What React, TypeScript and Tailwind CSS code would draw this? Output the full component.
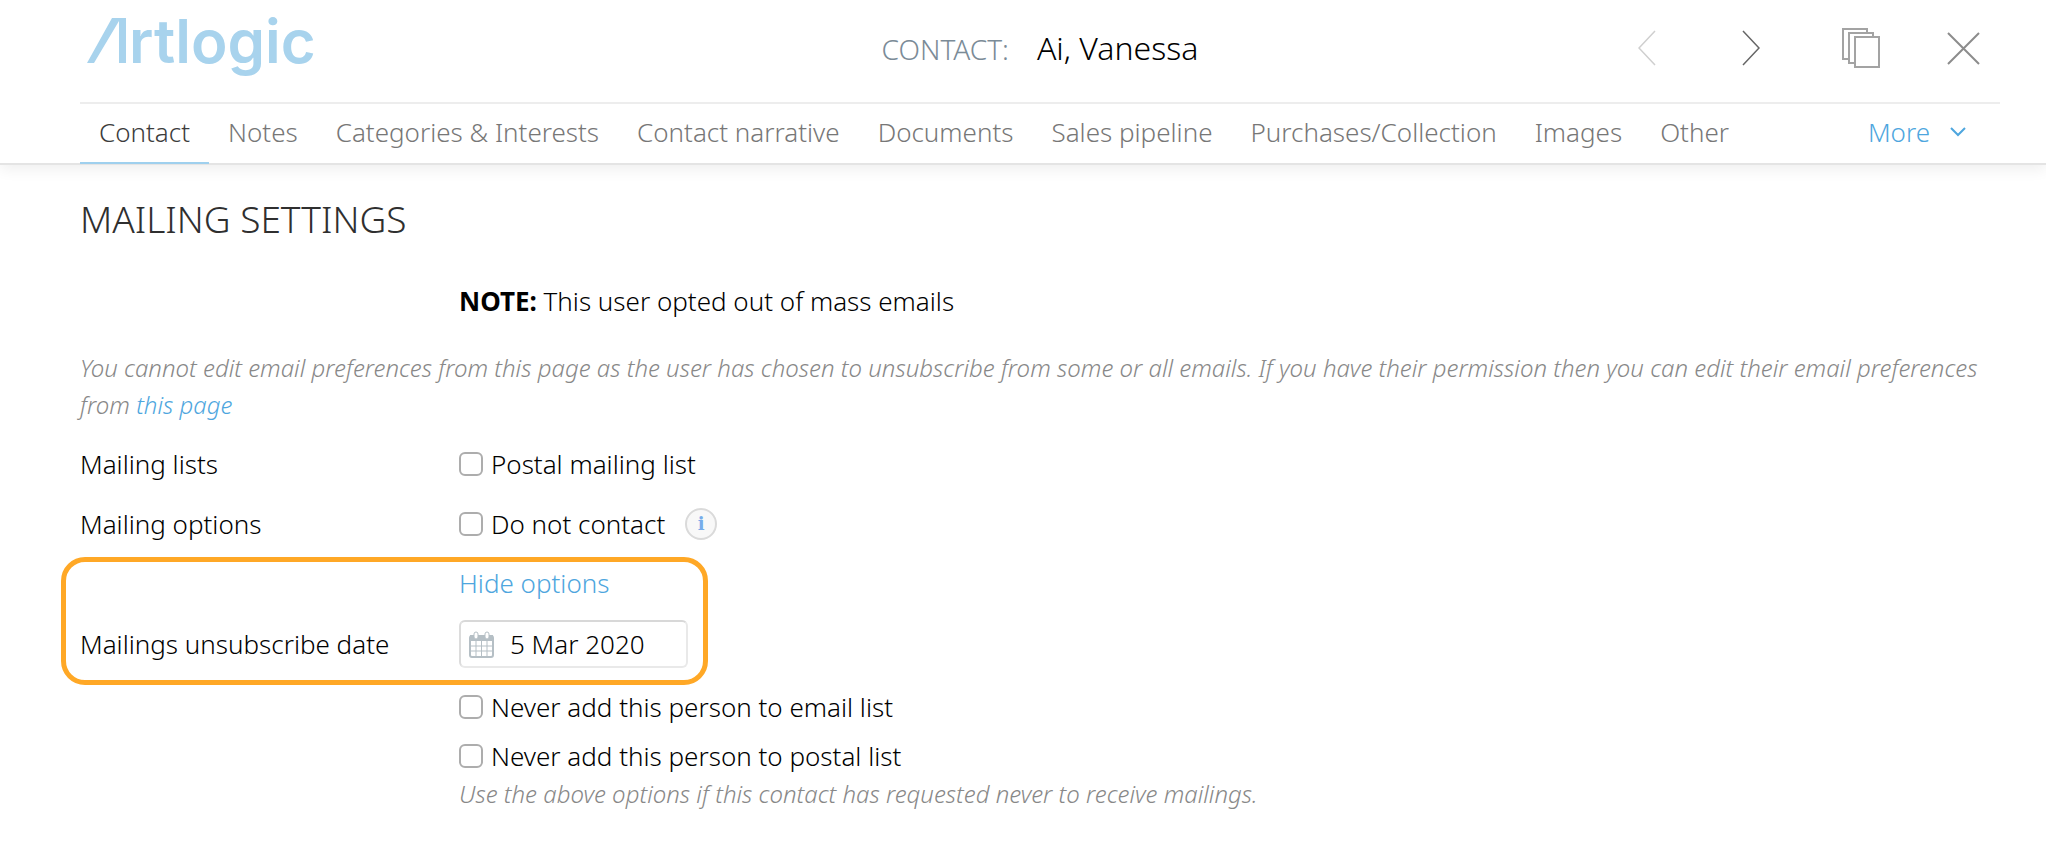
import { useState } from 'react';

const tabs = [
  'Contact',
  'Notes',
  'Categories & Interests',
  'Contact narrative',
  'Documents',
  'Sales pipeline',
  'Purchases/Collection',
  'Images',
  'Other',
];

const Logo = () => (
  <svg width="244" height="88" viewBox="0 0 244 88" fill="#a8d3ed" role="img" aria-label="Artlogic">
    <path d="M32 18h14v45h-7V21L14 63H7z" />
    <text x="49" y="63" fontFamily="Inter, sans-serif" fontSize="60" fontWeight="600">rtlogic</text>
  </svg>
);

const PagesIcon = () => (
  <svg width="38" height="40" viewBox="0 0 38 40" fill="#fff" stroke="#a3a3a3" strokeWidth="2">
    <path d="M1 1h24v30H1z" />
    <path d="M7 5h24v30H7z" />
    <path d="M13 9h24v30H13z" />
  </svg>
);

const CalendarIcon = () => (
  <svg width="25" height="27" viewBox="0 0 25 27" fill="none" className="shrink-0">
    <rect x="1" y="5" width="23" height="21" rx="2" fill="#fff" stroke="#b5bfc5" strokeWidth="2" />
    <path d="M1 4h23v6H1z" fill="#b5bfc5" />
    <path d="M7 10v16M12.500 10v16M18 10v16M1 15h23M1 20h23" stroke="#b5bfc5" strokeWidth="1" />
    <rect x="5" y="1" width="4" height="7" rx="2" fill="#fff" stroke="#b5bfc5" />
    <rect x="16" y="1" width="4" height="7" rx="2" fill="#fff" stroke="#b5bfc5" />
  </svg>
);

const CheckOption = ({ label }: { label: string }) => (
  <label className="flex w-fit items-center gap-2">
    <input
      type="checkbox"
      className="h-6 w-6 shrink-0 appearance-none rounded-md border-2 border-[#adadad] bg-white checked:bg-[#4ea6de]"
    />
    {label}
  </label>
);

const Header = () => {
  const [active, setActive] = useState('Contact');

  return (
    <header className="border-b-2 border-[#e4e4e4] pl-20 pr-[46px] shadow-[0_4px_14px_rgba(0,0,0,0.07)]">
      <div className="grid h-[104px] grid-cols-[1fr_auto_1fr] border-b-2 border-[#ededed]">
        <a href="#home" className="w-fit">
          <Logo />
        </a>
        <h1 className="flex items-baseline gap-7 pt-6 leading-[48px]">
          <span className="text-[28px] text-[#7b8b97]">CONTACT:</span>
          <span className="text-[32px]">Ai, Vanessa</span>
        </h1>
        <div className="flex h-24 items-center justify-end pr-5">
          <button aria-label="Previous contact">
            <svg width="18" height="36" viewBox="0 0 18 36" fill="none" stroke="#cfcfcf" strokeWidth="1.500">
              <path d="M17 1L1 18l16 17" />
            </svg>
          </button>
          <button aria-label="Next contact" className="ml-[86px]">
            <svg width="18" height="36" viewBox="0 0 18 36" fill="none" stroke="#666" strokeWidth="1.500">
              <path d="M1 1l16 17L1 35" />
            </svg>
          </button>
          <button aria-label="Copy contact" className="ml-[82px]">
            <PagesIcon />
          </button>
          <button aria-label="Close" className="ml-[67px]">
            <svg width="33" height="33" viewBox="0 0 33 33" fill="none" stroke="#8c8c8c" strokeWidth="2">
              <path d="M1 1l31 31M32 1L1 32" />
            </svg>
          </button>
        </div>
      </div>

      <nav className="-mb-px flex text-[26px] leading-[56px]">
        {tabs.map((tab) => (
          <button
            key={tab}
            onClick={() => setActive(tab)}
            className={`h-[60px] border-b-2 px-[19px] pb-0.5 whitespace-nowrap ${
              tab === active ? 'border-[#9fd0ee] text-[#3c3c3c]' : 'border-transparent text-[#777]'
            }`}
          >
            {tab}
          </button>
        ))}
        <button className="mr-[34px] ml-auto flex h-14 items-center gap-5 text-[#4ea6de]">
          More
          <svg width="16" height="10" viewBox="0 0 16 10" fill="none" stroke="currentColor" strokeWidth="2">
            <path d="M1 1l7 7 7-7" />
          </svg>
        </button>
      </nav>
    </header>
  );
};

export default function App() {
  const [showOptions, setShowOptions] = useState(true);

  return (
    <div className="min-h-screen bg-white font-['Noto_Sans',sans-serif] font-light text-black">
      <Header />

      <main className="pt-8 pr-[46px] pb-10 pl-20 text-[26px] leading-9">
        <h2 className="text-[37px] leading-[44px] text-[#2f2f2f]">MAILING SETTINGS</h2>

        <p className="mt-[42px] pl-[379px]">
          <strong className="font-bold">NOTE:</strong> This user opted out of mass emails
        </p>

        <p className="mt-[30px] text-[24px] leading-[37px] text-[#888] italic">
          You cannot edit email preferences from this page as the user has chosen to unsubscribe from some or all
          emails. If you have their permission then you can edit their email preferences from{' '}
          <a href="#preferences" className="text-[#4ea6de]">this page</a>
        </p>

        <div className="mt-[23px] grid grid-cols-[379px_1fr]">
          <span>Mailing lists</span>
          <CheckOption label="Postal mailing list" />
        </div>

        <div className="mt-6 grid grid-cols-[379px_1fr]">
          <span>Mailing options</span>
          <div className="flex items-center gap-5">
            <CheckOption label="Do not contact" />
            <button
              aria-label="About mailing options"
              className="h-8 w-8 rounded-full border-2 border-[#dadada] bg-[#f8f8f8] font-['DejaVu_Serif',serif] text-[18px] leading-7 font-bold text-[#76acea]"
            >
              i
            </button>
          </div>
        </div>

        <section className="mt-[15px] -ml-[19px] w-[647px] rounded-[24px] border-[5px] border-[#ffa826] pt-[3px] pb-3 pl-[14px]">
          <div className="pl-[379px]">
            <button onClick={() => setShowOptions(!showOptions)} className="block text-[#4ea6de]">
              {showOptions ? 'Hide options' : 'Show options'}
            </button>
          </div>
          <div className="mt-[19px] grid grid-cols-[379px_1fr] items-center">
            <label htmlFor="unsubscribe-date">Mailings unsubscribe date</label>
            <div className="flex h-12 w-[229px] items-center gap-4 rounded-md border-2 border-[#e9e9e9] border-t-[#d8d8d8] border-l-[#dcdcdc] pl-2">
              <CalendarIcon />
              <input id="unsubscribe-date" type="text" defaultValue="5 Mar 2020" className="w-full min-w-0 outline-none" />
            </div>
          </div>
        </section>

        {showOptions && (
          <div className="mt-1 pl-[379px]">
            <CheckOption label="Never add this person to email list" />
            <div className="mt-[13px]">
              <CheckOption label="Never add this person to postal list" />
            </div>
            <p className="mt-0.5 text-[24px] text-[#888] italic">
              Use the above options if this contact has requested never to receive mailings.
            </p>
          </div>
        )}
      </main>
    </div>
  );
}
